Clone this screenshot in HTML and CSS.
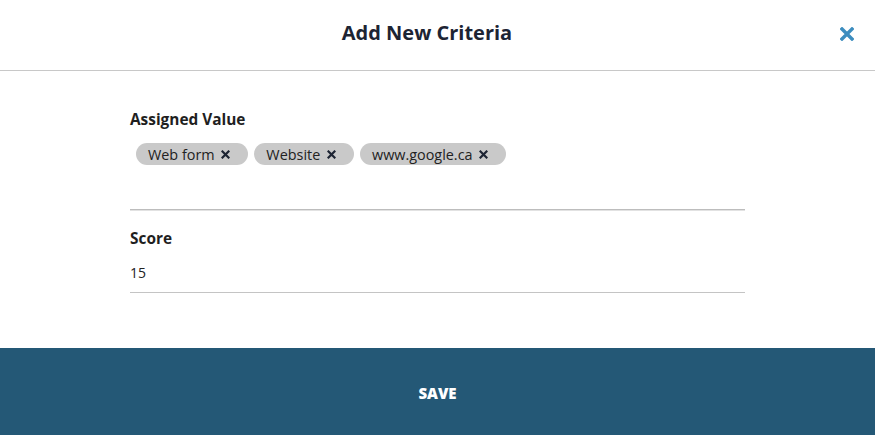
FILE: index.html
```html
<!DOCTYPE html>
<html>
<head>
<meta charset="utf-8">
<link rel="stylesheet" href="styles.css">
</head>
<body>
<div class="modal">
  <header class="modal-header">
    <h1 class="title">Add New Criteria</h1>
    <button class="close" aria-label="Close">
      <svg width="14" height="14" viewBox="0 0 14 14"><path d="M2 2L12 12M12 2L2 12" stroke="#3c8dbf" stroke-width="3.4" stroke-linecap="square"/></svg>
    </button>
  </header>
  <main class="modal-body">
    <section class="field field-tags">
      <label class="label">Assigned Value</label>
      <div class="tags">
        <span class="tag">Web form <svg class="tag-x" width="9" height="9" viewBox="0 0 9 9"><path d="M1.5 1.5L7.5 7.5M7.5 1.5L1.5 7.5" stroke="#1d2433" stroke-width="2.2" stroke-linecap="square"/></svg></span>
        <span class="tag">Website <svg class="tag-x" width="9" height="9" viewBox="0 0 9 9"><path d="M1.5 1.5L7.5 7.5M7.5 1.5L1.5 7.5" stroke="#1d2433" stroke-width="2.2" stroke-linecap="square"/></svg></span>
        <span class="tag">www.google.ca <svg class="tag-x" width="9" height="9" viewBox="0 0 9 9"><path d="M1.5 1.5L7.5 7.5M7.5 1.5L1.5 7.5" stroke="#1d2433" stroke-width="2.2" stroke-linecap="square"/></svg></span>
      </div>
    </section>
    <section class="field field-score">
      <label class="label">Score</label>
      <div class="value">15</div>
    </section>
  </main>
  <footer class="modal-footer">
    <button class="save">SAVE</button>
  </footer>
</div>
</body>
</html>
```
FILE: styles.css
```css
* { box-sizing: border-box; }
html, body { margin: 0; padding: 0; background: #fff; }
body {
  font-family: "Open Sans", "Liberation Sans", sans-serif;
  color: #222;
  width: 875px;
  height: 435px;
  overflow: hidden;
}
.modal { display: flex; flex-direction: column; height: 435px; }
.modal-header {
  height: 71px;
  border-bottom: 1px solid #c8c8c8;
  display: flex;
  align-items: center;
  justify-content: center;
  padding-right: 21px;
  position: relative;
}
.title {
  margin: 0;
  font-size: 20px;
  font-weight: 700;
  color: #1d2433;
  padding-bottom: 6px;
}
.close {
  position: absolute;
  right: 21px;
  top: 27px;
  border: 0;
  background: none;
  padding: 0;
  width: 14px;
  height: 14px;
  display: block;
}
.close svg { display: block; }
.modal-body {
  flex: 1;
  padding: 0 130px;
}
.field { width: 615px; }
.field-tags {
  padding-top: 38px;
  height: 139px;
  border-bottom: 1px solid #bdbdbd;
  box-shadow: 0 1px 0 #e2e2e2;
}
.label {
  display: block;
  font-size: 15.4px;
  font-weight: 700;
  line-height: 21px;
  color: #1f1f1f;
}
.tags {
  display: flex;
  gap: 6px;
  padding-left: 6px;
  margin-top: 13px;
}
.tag {
  display: inline-flex;
  align-items: center;
  height: 22px;
  padding: 0 18px 0 12px;
  border-radius: 11px;
  background: #c9c9c9;
  font-size: 14.4px;
  color: #222;
  white-space: pre;
}
.tag-x { margin-left: 3px; display: block; }
.field-score {
  padding-top: 18px;
  height: 83px;
  border-bottom: 1px solid #c4c4c4;
}
.value {
  margin-top: 14px;
  font-size: 14px;
  line-height: 20px;
}
.modal-footer {
  height: 87px;
  background: #245876;
  display: flex;
  align-items: center;
  justify-content: center;
}
.save {
  border: 0;
  background: none;
  color: #fff;
  font-family: "Open Sans", "Liberation Sans", sans-serif;
  font-weight: 800;
  font-size: 15px;
  padding: 0;
  margin-top: 2px;
}
```
